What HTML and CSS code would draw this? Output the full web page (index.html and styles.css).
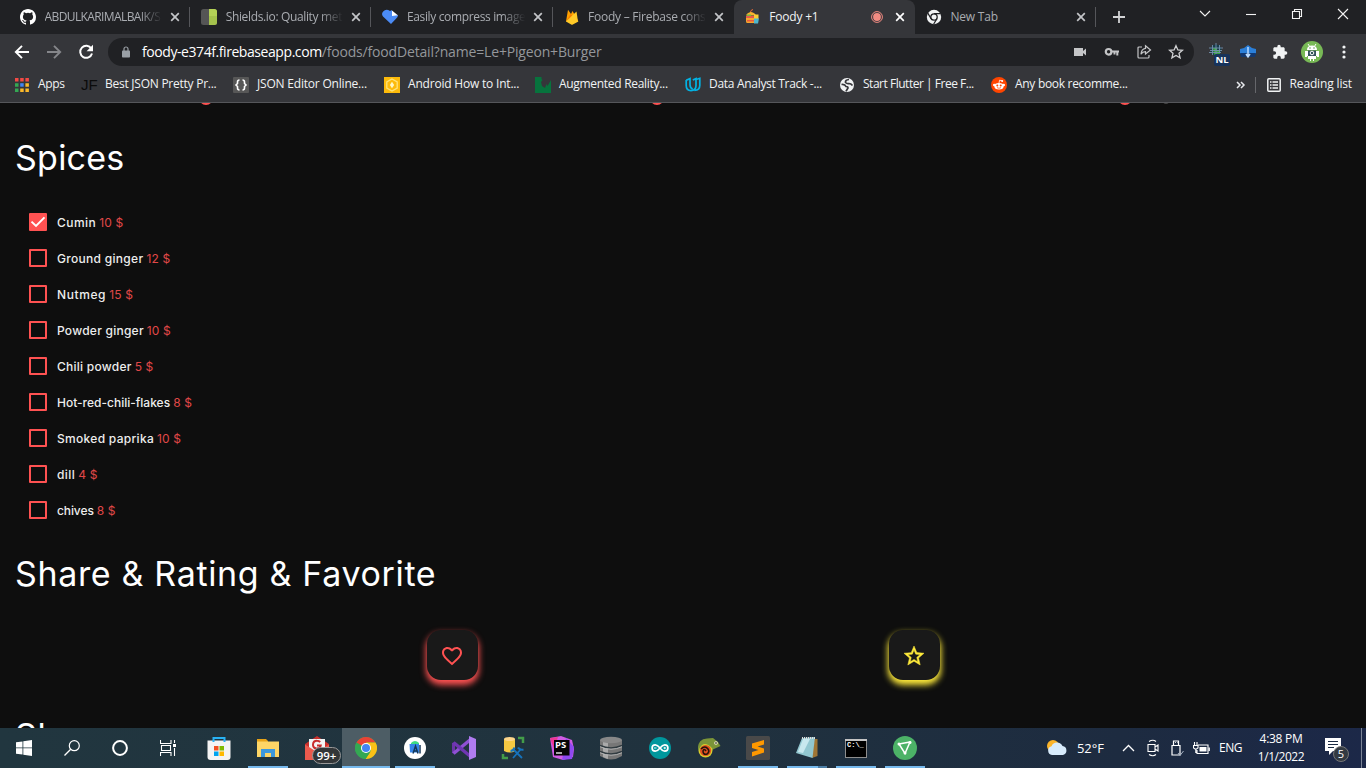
FILE: index.html
```html
<!DOCTYPE html>
<html lang="en">
<head>
<meta charset="utf-8">
<title>Foody +1</title>
<link rel="stylesheet" href="styles.css">
</head>
<body>
<div class="screen">
  <div class="tabstrip">
    <div class="tab">
      <svg class="fav" viewBox="0 0 16 16"><path fill="#fff" d="M8 0C3.58 0 0 3.58 0 8c0 3.54 2.29 6.53 5.47 7.59.4.07.55-.17.55-.38 0-.19-.01-.82-.01-1.49-2.01.37-2.53-.49-2.69-.94-.09-.23-.48-.94-.82-1.13-.28-.15-.68-.52-.01-.53.63-.01 1.08.58 1.23.82.72 1.21 1.87.87 2.33.66.07-.52.28-.87.51-1.07-1.78-.2-3.64-.89-3.64-3.95 0-.87.31-1.59.82-2.15-.08-.2-.36-1.02.08-2.12 0 0 .67-.21 2.2.82a7.4 7.4 0 0 1 4 0c1.53-1.04 2.2-.82 2.2-.82.44 1.1.16 1.92.08 2.12.51.56.82 1.27.82 2.15 0 3.07-1.87 3.75-3.65 3.95.29.25.54.73.54 1.48 0 1.07-.01 1.93-.01 2.2 0 .21.15.46.55.38A8.01 8.01 0 0 0 16 8c0-4.42-3.58-8-8-8z"/></svg>
      <span class="tab-title t1">ABDULKARIMALBAIK/S</span>
      <svg class="close" viewBox="0 0 10 10"><path d="M1.2 1.2l7.6 7.6M8.8 1.2L1.2 8.8"/></svg>
    </div>
    <div class="tab">
      <svg class="fav" viewBox="0 0 16 16"><rect width="16" height="16" rx="2.5" fill="#555"/><path d="M8 0h5.500a2.500 2.500 0 0 1 2.500 2.500v11a2.500 2.500 0 0 1-2.500 2.500H8z" fill="#a4c24c"/><path d="M8 0h5.500l2.500 2v5H8z" fill="#b3d156"/></svg>
      <span class="tab-title t2">Shields.io: Quality met</span>
      <svg class="close" viewBox="0 0 10 10"><path d="M1.2 1.2l7.6 7.6M8.800 1.200L1.200 8.800"/></svg>
    </div>
    <div class="tab">
      <svg class="fav" viewBox="0 0 16 16"><path fill="#4b8bf5" d="M1.200 2.500Q4-.5 8 2l2-1v5h6q0 2-2 3.800L9 15 1 7.500q-2-2.600.2-5z"/><path fill="#fff" d="M10 1.500l5.800 4.800L10 7z"/></svg>
      <span class="tab-title t3">Easily compress image</span>
      <svg class="close" viewBox="0 0 10 10"><path d="M1.200 1.200l7.600 7.600M8.800 1.200L1.200 8.800"/></svg>
    </div>
    <div class="tab last-before">
      <svg class="fav" viewBox="0 0 16 16"><path fill="#ffa000" d="M2 12.500L4 .8l3 4.200L8.500 2l6 10.500z"/><path fill="#f57c00" d="M2 12.500L6.500 5l3 3z"/><path fill="#ffca28" d="M2 12.500L12.500 2.500 14 12.700 8.800 15.600q-.8.400-1.600 0z"/></svg>
      <span class="tab-title t4">Foody – Firebase cons</span>
      <svg class="close" viewBox="0 0 10 10"><path d="M1.200 1.200l7.600 7.600M8.800 1.200L1.200 8.800"/></svg>
    </div>
    <div class="tab active">
      <svg class="fav" viewBox="0 0 16 16"><path d="M5 5l1-3.500 2-1" stroke="#ea6a35" fill="none"/><path fill="#f7b42c" d="M1 6.500q1-3 5-3.500Q10 3.500 11 6.500z"/><path fill="#e45b4d" d="M1 7h10v2H1z"/><path fill="#6fb846" d="M2 5.500h4v1.500H2z"/><path fill="#f8a62b" d="M1 9h10v5H2q-1 0-1-2z"/><path fill="#eb5a3f" d="M2 11h8v1.500H2z"/><path fill="#f9ce35" d="M9 5.500h4.500V10H9z"/><path fill="#4eb6cd" d="M9 9.500h5l-1 5H9z"/></svg>
      <span class="tab-title t5">Foody +1</span>
      <svg class="rec" viewBox="0 0 12 12"><circle cx="6" cy="6" r="5.400" fill="none" stroke="#f28b82" stroke-width="1"/><circle cx="6" cy="6" r="3.900" fill="#f28b82"/></svg>
      <svg class="close" viewBox="0 0 10 10"><path d="M1.200 1.200l7.600 7.600M8.800 1.200L1.200 8.800"/></svg>
    </div>
    <div class="tab">
      <svg class="fav" viewBox="0 0 16 16"><circle cx="8" cy="8" r="7.200" fill="#f1f3f4"/><circle cx="8" cy="8" r="3.200" fill="none" stroke="#202124" stroke-width="1.300"/><path d="M8 4.700h6.500M5.100 9.700L1.800 4.100M10.900 9.600l-3.300 5.600" stroke="#202124" stroke-width="1.200"/></svg>
      <span class="tab-title t6">New Tab</span>
      <svg class="close" viewBox="0 0 10 10"><path d="M1.200 1.200l7.600 7.600M8.800 1.200L1.200 8.800"/></svg>
    </div>
    <svg class="newtab" viewBox="0 0 12 12"><path d="M6 0v12M0 6h12" stroke="#d2d3d5" stroke-width="1.800"/></svg>
    <div class="winctl">
      <svg width="12" height="12" viewBox="0 0 12 12"><path d="M1 3l5 5 5-5"/></svg>
      <svg width="12" height="12" viewBox="0 0 12 12"><path d="M1 6.500h10"/></svg>
      <svg width="12" height="12" viewBox="0 0 12 12"><path d="M1.500 3.500h7v7h-7zM3.500 3.500v-2h7v7h-2"/></svg>
      <svg width="12" height="12" viewBox="0 0 12 12"><path d="M1 1l10 10M11 1L1 11"/></svg>
    </div>
  </div>

  <div class="toolbar">
    <svg class="nav" viewBox="0 0 16 16"><path d="M15 8H2M8 1.800L1.800 8 8 14.200" fill="none" stroke="#fff" stroke-width="1.900"/></svg>
    <svg class="nav" viewBox="0 0 16 16"><path d="M1 8h13M8 1.800L14.200 8 8 14.200" fill="none" stroke="#85868a" stroke-width="1.900"/></svg>
    <svg class="nav" viewBox="0 0 16 16"><path d="M13.300 4.600A6 6 0 1 0 14 9.500" fill="none" stroke="#fff" stroke-width="2"/><path fill="#fff" d="M15 .8v6.400H8.600z"/></svg>
    <div class="omnibox">
      <svg class="lock" viewBox="0 0 8 12"><path d="M2 5V3a2 2 0 0 1 4 0v2" fill="none" stroke="#9aa0a6" stroke-width="1.200"/><rect y="4.500" width="8" height="7" rx=".8" fill="#9aa0a6"/></svg>
      <span class="url"><span class="host">foody-e374f.firebaseapp.com</span><span class="path">/foods/foodDetail?name=Le+Pigeon+Burger</span></span>
      <svg class="oi" viewBox="0 0 16 16"><path fill="#c4c5c7" d="M2 4h9v3l3-2.500v7L11 9v3H2z"/></svg>
      <svg class="oi" viewBox="0 0 16 16"><path fill="none" stroke="#c4c5c7" stroke-width="2" d="M8 7.500h7M13.300 7.500v4M10.500 7.500v3"/><circle cx="4.600" cy="7.800" r="2.800" fill="none" stroke="#c4c5c7" stroke-width="2.200"/></svg>
      <svg class="oi" viewBox="0 0 16 16"><path fill="none" stroke="#c4c5c7" stroke-width="1.200" d="M6 3H3Q2 3 2 4v9q0 1 1 1h9q1 0 1-1v-2M9.500 1.800L14.500 6l-5 4V7.700Q6.500 7.700 5 10.300 5.300 5 9.500 4.400z"/></svg>
      <svg class="oi" viewBox="0 0 16 16"><path fill="none" stroke="#d0d1d3" stroke-width="1.300" d="M8 1.700l1.900 4.200 4.600.4-3.500 3 1.100 4.500L8 11.400l-4.100 2.400L5 9.300l-3.500-3 4.600-.4z"/></svg>
    </div>
    <div class="exts">
      <div class="ext-nl">
        <svg width="18" height="18" viewBox="0 0 18 18"><circle cx="8" cy="7" r="5.500" fill="#173c4b"/><path fill="#36a33a" d="M5 5h4v2h3v5H6z"/><path d="M1 5h14M1 9.500h12M2 7.500h12M4.500 2v10M8 0v14M11.500 2v8" stroke="#7590ad" stroke-width=".9" fill="none"/></svg>
        <span class="nl">NL</span>
      </div>
      <svg width="16" height="16" viewBox="0 0 16 16"><path fill="#2b7fd8" d="M0 5l4-1 4-3 4 3 4 1v5H0z"/><path fill="#12376e" d="M0 9h16l-1 4H1z"/><path d="M8 3v9M6 10l2 3 2-3" stroke="#bcdcff" stroke-width="1.500" fill="none"/></svg>
      <svg width="16" height="16" viewBox="0 0 24 24"><path fill="#f1f3f4" d="M20.500 11H19V7c0-1.100-.9-2-2-2h-4V3.500a2.500 2.500 0 0 0-5 0V5H4c-1.100 0-2 .9-2 2v3.800h1.500a2.700 2.700 0 0 1 0 5.400H2V20c0 1.100.9 2 2 2h3.800v-1.500a2.700 2.700 0 0 1 5.400 0V22H17c1.100 0 2-.9 2-2v-4h1.500a2.500 2.500 0 0 0 0-5z"/></svg>
      <svg width="22" height="22" viewBox="0 0 22 22"><circle cx="11" cy="11" r="11" fill="#78b956"/><path d="M7 3l2 3M15 3l-2 3" stroke="#fff"/><path fill="#fff" d="M6 9q0-4.500 5-4.500T16 9zM4 10h14v6h-2v-1H6v1H4zM7 15h8v3h-2v2h-1v-2h-2v2H9v-2H7z"/><circle cx="9" cy="7" r=".7" fill="#468038"/><circle cx="13" cy="7" r=".7" fill="#468038"/><rect x="7" y="9.500" width="8" height="5.500" fill="#35535d"/><circle cx="11" cy="12" r="1.800" fill="none" stroke="#fff"/></svg>
      <svg width="4" height="16" viewBox="0 0 4 16"><circle cx="2" cy="3" r="1.600" fill="#f1f3f4"/><circle cx="2" cy="8" r="1.600" fill="#f1f3f4"/><circle cx="2" cy="13" r="1.600" fill="#f1f3f4"/></svg>
    </div>
  </div>

  <div class="bookmarks">
    <div class="bm b1"><svg viewBox="0 0 16 16"><path fill="#f44a45" d="M1 1h3.500v3.500H1zM6.200 1h3.500v3.500H6.200zM11.400 1h3.500v3.500h-3.500z"/><path fill="#34a853" d="M1 6.200h3.500v3.500H1zM1 11.400h3.500v3.500H1z"/><path fill="#4285f4" d="M6.200 6.200h3.500v3.500H6.200z"/><path fill="#fbb829" d="M11.400 6.200h3.500v3.500h-3.500zM6.200 11.400h3.500v3.500H6.200zM11.400 11.400h3.500v3.500h-3.500z"/></svg><span>Apps</span></div>
    <div class="bm b2"><i class="jf">JF</i><span>Best JSON Pretty Pr...</span></div>
    <div class="bm b3"><svg viewBox="0 0 16 16"><rect width="16" height="16" rx="1" fill="#575757"/><path d="M6.500 3Q4.500 3 4.500 5v1.500L3 8l1.500 1.500V11q0 2 2 2M9.500 3q2 0 2 2v1.500L13 8l-1.500 1.500V11q0 2-2 2" fill="none" stroke="#fff" stroke-width="1.600"/></svg><span>JSON Editor Online...</span></div>
    <div class="bm b4"><svg viewBox="0 0 16 16"><rect width="16" height="16" fill="#fdbb0b"/><path d="M8 2l5.200 3v6L8 14l-5.200-3V5z" fill="none" stroke="#ffe37a" stroke-width="1.300"/><path d="M8 4.800l2.200 3.200L8 11.200 5.800 8z" fill="#fff6c2"/></svg><span>Android How to Int...</span></div>
    <div class="bm b5"><svg viewBox="0 0 16 16"><path fill="#07733d" d="M0 0h6.500v2l1 1L6 5l1 4 3 2 1.500-4 1 2L16 3v13H0z"/></svg><span>Augmented Reality...</span></div>
    <div class="bm b6"><svg viewBox="0 0 16 16"><path d="M1.200 3.200L5 1.600v6.200q0 3.200 2.700 4.200M7.800 3L11 1.600v7q0 5-5 5-4.800 0-4.800-5V3M11 2.500l3.800-1.200v7q0 5-5.300 5.200" fill="none" stroke="#02b3e4" stroke-width="1.700"/></svg><span>Data Analyst Track -...</span></div>
    <div class="bm b7"><svg viewBox="0 0 16 16"><circle cx="8" cy="8" r="7" fill="#f1f3f4"/><path d="M2.500 7.500Q6 7 7 9.500q2 0 2 1.500L7 14.300M10 2.500Q6 3 6.500 5.500 8 7 10 6.500q2 0 3.500 2" fill="none" stroke="#35363a" stroke-width="1.700"/></svg><span>Start Flutter | Free F...</span></div>
    <div class="bm b8"><svg viewBox="0 0 16 16"><circle cx="8" cy="8" r="8" fill="#ff4500"/><ellipse cx="8" cy="9.200" rx="4.600" ry="3.300" fill="#fff"/><circle cx="3.300" cy="8" r="1.300" fill="#fff"/><circle cx="12.700" cy="8" r="1.300" fill="#fff"/><path d="M8 6l.6-2.800 2.400.6" stroke="#fff" fill="none" stroke-width=".8"/><circle cx="11.200" cy="3.900" r="1" fill="#fff"/><circle cx="6.300" cy="8.500" r="1" fill="#ff4500"/><circle cx="9.700" cy="8.500" r="1" fill="#ff4500"/><path d="M6 10.600q2 1.300 4 0" stroke="#ff4500" fill="none" stroke-width=".7"/></svg><span>Any book recomme...</span></div>
    <div class="bm-right">
      <svg width="10" height="8" viewBox="0 0 10 8"><path d="M1 1l3 3-3 3M5 1l3 3-3 3" fill="none" stroke="#e8eaed" stroke-width="1.500"/></svg>
      <i class="vsep"></i>
      <svg width="14" height="14" viewBox="0 0 14 14"><rect x=".8" y=".8" width="12.400" height="12.400" rx="1" fill="none" stroke="#f1f3f4" stroke-width="1.500"/><path d="M3 4h1.500M3 7h1.500M3 10h1.500M5.500 4H11M5.500 7H11M5.500 10H11" stroke="#f1f3f4" stroke-width="1.500"/></svg>
      <span>Reading list</span>
    </div>
  </div>

  <main class="page">
    <div class="cut"><i></i><i></i><i></i><i class="dim"></i></div>
    <h1 class="h-spices">Spices</h1>
    <ul class="spices">
      <li><i class="box on"><svg viewBox="0 0 18 18"><path d="M2.500 8.600l4.500 4.300L15.500 4.400" fill="none" stroke="#fff" stroke-width="2"/></svg></i><b class="s1">Cumin</b><em>10 $</em></li>
      <li><i class="box"></i><b class="s2">Ground ginger</b><em>12 $</em></li>
      <li><i class="box"></i><b class="s3">Nutmeg</b><em>15 $</em></li>
      <li><i class="box"></i><b class="s4">Powder ginger</b><em>10 $</em></li>
      <li><i class="box"></i><b class="s5">Chili powder</b><em>5 $</em></li>
      <li><i class="box"></i><b class="s6">Hot-red-chili-flakes</b><em>8 $</em></li>
      <li><i class="box"></i><b class="s7">Smoked paprika</b><em>10 $</em></li>
      <li><i class="box"></i><b class="s8">dill</b><em>4 $</em></li>
      <li><i class="box"></i><b class="s9">chives</b><em>8 $</em></li>
    </ul>
    <h1 class="h-share">Share &amp; Rating &amp; Favorite</h1>
    <div class="actions">
      <div class="act red"><svg width="24" height="24" viewBox="0 0 24 24"><path fill="#ff5252" d="M16.500 3c-1.740 0-3.410.81-4.500 2.090C10.910 3.810 9.240 3 7.500 3 4.420 3 2 5.420 2 8.500c0 3.780 3.400 6.860 8.550 11.540L12 21.350l1.450-1.320C18.600 15.360 22 12.280 22 8.500 22 5.420 19.580 3 16.500 3zm-4.400 15.550l-.1.100-.1-.1C7.140 14.240 4 11.390 4 8.500 4 6.500 5.500 5 7.500 5c1.540 0 3.040.99 3.570 2.360h1.870C13.460 5.990 14.960 5 16.500 5c2 0 3.500 1.500 3.500 3.500 0 2.890-3.140 5.740-7.900 10.050z"/></svg></div>
      <div class="act yellow"><svg width="24" height="24" viewBox="0 0 24 24"><path fill="#ffeb3b" stroke="#ffeb3b" stroke-width=".5" d="M22 9.240l-7.190-.62L12 2 9.190 8.630 2 9.240l5.460 4.730L5.820 21 12 17.270 18.180 21l-1.630-7.030L22 9.240zM12 15.400l-3.760 2.270 1-4.280-3.320-2.880 4.380-.38L12 6.100l1.710 4.040 4.380.38-3.320 2.880 1 4.280L12 15.400z"/></svg></div>
    </div>
    <h1 class="h-next">Share</h1>
  </main>

  <footer class="taskbar">
    <div class="cells sys">
      <div class="cell"><svg width="16" height="16" viewBox="0 0 16 16"><path fill="#fff" d="M0 2.300l6.500-.9v6.100H0zM7.300 1.300L16 0v7.500H7.300zM0 8.300h6.500v6.300L0 13.700zM7.300 8.300H16V16l-8.700-1.200z"/></svg></div>
      <div class="cell"><svg width="16" height="16" viewBox="0 0 16 16"><circle cx="10.300" cy="5.700" r="5" fill="none" stroke="#fff" stroke-width="1.200"/><path d="M6.700 9.300L.5 15.500" stroke="#fff" stroke-width="1.300"/></svg></div>
      <div class="cell"><svg width="16" height="16" viewBox="0 0 16 16"><circle cx="8" cy="8" r="6.900" fill="none" stroke="#fff" stroke-width="2"/></svg></div>
      <div class="cell"><svg width="16" height="16" viewBox="0 0 16 16"><path d="M.5 0v3.500h10.500V0M1.500 5.500h9v5h-9zM.5 16v-3.500H11V16M14.500 0v3M14.500 8v8" fill="none" stroke="#fff" stroke-width="1.100"/><path fill="#fff" d="M13 4h3v3h-3z"/></svg></div>
    </div>
    <div class="cells apps">
      <div class="cell"><svg width="24" height="24" viewBox="0 0 24 24"><path fill="#f4f4f4" d="M.5 4.500h23v16.500q0 3-3 3h-17q-3 0-3-3z"/><path d="M6.500 6V2h11v4" fill="none" stroke="#28b2f4" stroke-width="2"/><path fill="#f25022" d="M7 10h4.500v4.500H7z"/><path fill="#7fba00" d="M12.500 10H17v4.500h-4.500z"/><path fill="#00a4ef" d="M7 15.500h4.500V20H7z"/><path fill="#ffb900" d="M12.500 15.500H17V20h-4.500z"/></svg></div>
      <div class="cell open"><svg width="24" height="24" viewBox="0 0 24 24"><path fill="#e8a317" d="M1 3h9l2 2v3H1z"/><path fill="#fdd566" d="M1 5.500h22V21H1z"/><path fill="#3c98dc" d="M5 13h14v8h-4v-4H9v4H5z"/></svg></div>
      <div class="cell gm"><svg width="24" height="24" viewBox="0 0 24 24"><path fill="#c9302c" d="M0 8L12 0l12 8v16H0z"/><path fill="#f3f3f3" d="M4 3h16v11H4z"/><path d="M15.200 6q-1.200-1.300-3.200-1.300a3.900 3.900 0 1 0 3.700 4.800H12" stroke="#c92c2c" stroke-width="2" fill="none"/><path fill="#ec5a4d" d="M0 8.500l12 7.500 12-7.500V24H0z"/></svg><span class="count">99+</span></div>
      <div class="cell active"><svg width="22" height="22" viewBox="0 0 22 22"><circle cx="11" cy="11" r="11" fill="#34a853"/><path fill="#e94235" d="M11 11L1.500 5.500A11 11 0 0 1 20.500 5.500H11z"/><path fill="#fbc116" d="M20.500 5.500A11 11 0 0 1 10.500 22L15.800 13.700 11 5.500z"/><path fill="#34a853" d="M1.500 5.500l4.800 8.200L11 16l4.300-1L10.500 22A11 11 0 0 1 1.500 5.500z"/><circle cx="11" cy="11" r="5" fill="#fff"/><circle cx="11" cy="11" r="4" fill="#4285f4"/></svg></div>
      <div class="cell open"><svg width="22" height="22" viewBox="0 0 22 22"><circle cx="11" cy="11" r="11" fill="#fff"/><path fill="#3ddc84" d="M7 6q4-4 8 0v4H7z"/><path fill="#3484e8" d="M5.500 7H15v8.500H6z"/><path d="M9 16.500l2.500-7.500 2.500 7.500M9.800 14h3.500M16 8v8.500" stroke="#143757" stroke-width="1.500" fill="none"/></svg></div>
      <div class="cell"><svg width="24" height="24" viewBox="0 0 24 24"><path fill="#6b35a8" d="M0 7l3-1v12l-3-1z"/><path d="M1.500 17.500L18 4" stroke="#8f50d4" stroke-width="3.500"/><path d="M1.500 6.500L18 20" stroke="#6f35b3" stroke-width="3.500"/><path fill="#b07cf0" d="M17 0l7 3v18l-7 3z"/></svg></div>
      <div class="cell"><svg width="24" height="24" viewBox="0 0 24 24"><path d="M17 2h5v5M2 18v4h5" fill="none" stroke="#439d49" stroke-width="2.500"/><path fill="#f5c842" d="M3 3h11v12q-5 3-11 0z"/><ellipse cx="8.500" cy="3" rx="5.500" ry="2" fill="#fdd58a"/><path d="M12 13l9 9M20 13l-8 9" stroke="#1673bd" stroke-width="1.800" fill="none"/><path d="M17 11.500q2 3 5.500 2M9.500 15q3 0 4-3.500" stroke="#1673bd" stroke-width="2.200" fill="none"/></svg></div>
      <div class="cell"><svg width="24" height="24" viewBox="0 0 24 24"><path fill="#d05be4" d="M0 2l11-2 11 4 2 9-1 8-10 3L3 21z"/><path fill="#8e49f0" d="M16 2l8 9-2 12-10 1z"/><path fill="#ef3794" d="M0 2l8-1-4 12z"/><rect x="4" y="4" width="15.500" height="15.500" fill="#050505"/><path d="M6 17h6" stroke="#fff" stroke-width="1.300"/></svg><span class="ps">PS</span></div>
      <div class="cell"><svg width="24" height="24" viewBox="0 0 24 24"><path fill="#777" d="M1 4h22v16q-11 7-22 0z"/><path fill="#aaa" d="M4 6h5v17l-5-2z"/><ellipse cx="12" cy="4" rx="11" ry="3.300" fill="#888"/><path d="M1 9.500q11 5 22 0M1 15.500q11 5 22 0" stroke="#303b40" stroke-width="1.500" fill="none"/><path d="M1 10.700q11 5 22 0M1 16.700q11 5 22 0" stroke="#c2c2c2" stroke-width=".8" fill="none"/></svg></div>
      <div class="cell"><svg width="22" height="22" viewBox="0 0 22 22"><circle cx="11" cy="11" r="11" fill="#00979d"/><path d="M11 11Q8.500 7.800 6.300 7.800a3.200 3.200 0 0 0 0 6.400Q8.500 14.200 11 11q2.500-3.200 4.700-3.200a3.200 3.200 0 0 1 0 6.400Q13.500 14.200 11 11z" fill="none" stroke="#fff" stroke-width="1.700"/><path d="M5 11h2.500M14.500 11H17M15.750 9.800v2.400" stroke="#fff" stroke-width=".9"/></svg></div>
      <div class="cell"><svg width="24" height="24" viewBox="0 0 24 24"><path fill="#7b9538" d="M1 12Q1 3 10 2.500L16 2l5 4 2.500 4-5.500 2.500-3 1.500-5 0z"/><circle cx="8.500" cy="14.500" r="7" fill="#d8cf2e"/><circle cx="8.500" cy="14.500" r="5.600" fill="#e2501f"/><path d="M9 15q-2-3-3 0 0 4 4 3 3-2 1-5-3-4-7 0" stroke="#25150b" stroke-width="1.600" fill="none"/><path fill="#7b9538" d="M1 13Q1 6 9 5l6 2v5Q9 6 5 9q-2.500 2-3 6z"/><circle cx="19" cy="7" r="1.800" fill="#f4f1d3"/><circle cx="19" cy="7" r=".8"/></svg></div>
      <div class="cell open"><svg width="24" height="24" viewBox="0 0 24 24"><rect width="24" height="24" rx="1.500" fill="#494949"/><path fill="#ff9800" d="M6 7.500L18 4v4.500l-6.500 2 6.500 2v4L6 20.500V16l6.500-2L6 12z"/></svg></div>
      <div class="cell open multi"><svg width="24" height="24" viewBox="0 0 24 24"><path fill="#9f7535" d="M19 3h3.500v17L17 22z"/><path fill="#92c7d0" d="M7 2l13-1-2.500 21L1 17z"/><path fill="#c8e8ee" d="M8 3h7L8 17l-5-1z"/><path d="M7 2h13" stroke="#ddd" stroke-width="1.800" stroke-dasharray="1 1"/></svg></div>
      <div class="cell open"><svg width="24" height="24" viewBox="0 0 24 24"><path fill="#8e8e8e" d="M1 3h22v19H1z"/><path fill="#c4c4c4" d="M1 3h22v2H1z"/><path fill="#000" d="M2 5h20v16H2z"/></svg><span class="cmd">C:\_</span></div>
      <div class="cell open"><svg width="24" height="24" viewBox="0 0 24 24"><circle cx="12" cy="12" r="12" fill="#4cb267"/><path d="M6 8l11-2-5 11.500z" fill="none" stroke="#fff" stroke-width="1.500"/><circle cx="6" cy="8" r="1.500" fill="#fff"/><circle cx="17" cy="6.500" r="1.500" fill="#fff"/><circle cx="12" cy="17" r="1.500" fill="#fff"/></svg></div>
    </div>
    <div class="tray">
      <svg class="weather" width="22" height="18" viewBox="0 0 22 18"><circle cx="7" cy="7" r="6" fill="#fbb42a"/><path fill="#d7ebfc" d="M6 16a4.500 4.500 0 0 1-.5-8.800 6 6 0 0 1 11-.2A4.600 4.600 0 0 1 17 16z"/></svg>
      <span class="temp">52°F</span>
      <svg class="chev" width="13" height="8" viewBox="0 0 13 8"><path d="M1 7l5.500-5.500L12 7" fill="none" stroke="#fff" stroke-width="1.300"/></svg>
      <svg class="cam" width="12" height="18" viewBox="0 0 12 18"><path d="M1 5.500h7v7H1zM8 8l3-2v6l-3-2M2 2.500Q6 0 9 2.500M2 15.500q4 2.500 7 0" fill="none" stroke="#fff" stroke-width="1.100"/></svg>
      <svg class="usb" width="13" height="17" viewBox="0 0 13 17"><path d="M2.500 5V1h5v4M1 5.500h8V15H1zM4 2.500h.8M6 2.500h.5" fill="none" stroke="#fff" stroke-width="1.200"/><path d="M7 13l2 2.500L12.500 11" fill="none" stroke="#a9b4c4"/></svg>
      <svg class="bat" width="17" height="13" viewBox="0 0 17 13"><path d="M6.500 5h7v4.500h-7z" fill="#fff"/><path d="M5 3h10v8.500H4V8M16.300 5.500v3.500M1.500 0v3M4 0v3M.5 3.500h4.500V6L3.500 7H2L.5 6zM2.800 7v3.500H4" fill="none" stroke="#fff" stroke-width="1.100"/></svg>
      <span class="eng">ENG</span>
      <div class="clock"><span class="time">4:38 PM</span><span class="date">1/1/2022</span></div>
      <div class="note"><svg width="17" height="17" viewBox="0 0 17 17"><path fill="#fff" d="M0 0h16v13H8l-4 4v-4H0z"/><path d="M3 3.500h10M3 6.500h10M3 9.500h6" stroke="#1b2a42" stroke-width="1.100"/></svg><span class="badge">5</span></div>
      <i class="peek"></i>
    </div>
  </footer>
</div>
</body>
</html>
```
FILE: styles.css
```css
* { box-sizing: border-box; }
body { margin: 0; background: #0e0e0e; font-family: "Open Sans", "Noto Sans", sans-serif; }
svg { display: block; flex: none; }
i, em { font-style: normal; }
.screen { width: 1366px; height: 768px; display: flex; flex-direction: column; overflow: hidden; }

/* tab strip */
.tabstrip { height: 34px; flex: none; background: #202124; display: flex; padding-left: 9px; }
.tab { width: 181.200px; flex: none; height: 34px; display: flex; align-items: center; padding: 0 10px 0 11px; position: relative; color: #a9acb1; font-size: 12px; }
.tab::after { content: ""; width: 1px; height: 20px; background: #55565a; position: absolute; right: 0; top: 7px; }
.tab.active::after, .tab.last-before::after { display: none; }
.tab.active { background: #35363a; border-radius: 8px 8px 0 0; color: #f1f3f4; }
.fav { width: 16px; height: 16px; }
.tab-title { flex: 1; margin: 0 4px 0 8.500px; white-space: nowrap; line-height: 18px; letter-spacing: -.2px; }
.t1, .t2, .t3, .t4 { -webkit-mask-image: linear-gradient(90deg, #000 78%, transparent 97%); mask-image: linear-gradient(90deg, #000 78%, transparent 97%); }
.t1 { letter-spacing: -.6px; }
.t2, .t3 { letter-spacing: -.35px; }
.t4 { letter-spacing: -.25px; }
.close { width: 10px; height: 10px; }
.close path { stroke: #c3c5c8; stroke-width: 1.700; }
.active .close path { stroke: #fff; }
.rec { width: 12px; height: 12px; margin-right: 12px; }
.newtab { width: 12px; height: 12px; margin: 11px 0 0 17px; }
.winctl { display: flex; gap: 34px; margin: 8px 17px 0 auto; }
.winctl path { fill: none; stroke: #f3f3f3; stroke-width: 1.100; }

/* toolbar */
.toolbar { height: 34px; flex: none; background: #35363a; display: flex; align-items: center; padding-left: 14px; padding-top: 2px; }
.nav { width: 16px; height: 16px; margin-right: 16px; }
.omnibox { width: 1086px; height: 28px; border-radius: 14px; background: #202124; display: flex; align-items: center; padding: 0 10px 0 14px; margin-left: -2px; }
.lock { width: 8px; height: 12px; }
.url { flex: 1; margin-left: 12px; font-size: 14px; line-height: 20px; white-space: nowrap; }
.host { color: #fff; letter-spacing: -.43px; }
.path { color: #94979b; letter-spacing: -.17px; }
.oi { width: 16px; height: 16px; margin-left: 16px; }
.exts { display: flex; align-items: center; margin-left: 14px; }
.exts > * { margin-right: 16px; }
.exts > :nth-child(1) { margin-right: 14px; }
.exts > :nth-child(3) { margin-right: 13px; }
.exts > :nth-child(4) { margin-right: 19px; }
.ext-nl { width: 18px; height: 18px; position: relative; }
.nl { position: absolute; left: 6px; top: 11px; width: 16px; height: 12px; border-radius: 2px; background: #17335b; color: #fff; font-size: 9.500px; font-weight: 700; line-height: 12px; text-align: center; }

/* bookmarks */
.bookmarks { height: 35px; flex: none; background: #35363a; border-bottom: 1px solid #55565a; display: flex; align-items: center; padding: 0 14px 1px 14px; color: #f1f3f4; font-size: 12px; line-height: 18px; }
.bm { display: flex; align-items: center; gap: 8px; white-space: nowrap; flex: none; letter-spacing: -.3px; }
.bm span, .bm-right span { margin-bottom: 2px; }
.bm svg, .jf { width: 16px; height: 16px; }
.jf { color: #0b0b0b; font: 15px/16px "Liberation Sans", sans-serif; letter-spacing: 0; }
.b1 { width: 67px; }
.b2 { width: 152px; letter-spacing: -.25px; }
.b3 { width: 151px; letter-spacing: -.2px; }
.b4 { width: 151px; letter-spacing: -.2px; }
.b5 { width: 150px; }
.b6 { width: 154px; }
.b7 { width: 152px; letter-spacing: -.48px; }
.b8 { width: 148px; }
.bm-right { display: flex; align-items: center; margin-left: auto; letter-spacing: -.15px; white-space: nowrap; }
.vsep { width: 1px; height: 16px; background: #66676b; margin: 0 11px 0 9px; }
.bm-right span { margin-left: 9px; }

/* page */
.page { height: 625px; flex: none; overflow: hidden; background: #0e0e0e; font-family: Inter, "Open Sans", sans-serif; color: #fff; display: flow-root; }
.cut { height: 2px; overflow: hidden; display: flex; align-items: flex-end; padding-left: 199px; }
.cut i { width: 14px; height: 14px; flex: none; border-radius: 7px; background: #ff5252; margin-right: 437px; }
.cut i:nth-child(2) { margin-right: 454px; }
.cut i:nth-child(3) { margin-right: 31px; }
.cut i.dim { width: 6px; height: 6px; background: #444; margin: 0 0 1px; }
h1 { margin: 0; padding-left: 15px; font-size: 34px; line-height: 44px; font-weight: 400; white-space: nowrap; letter-spacing: .65px; }
.h-spices { margin-top: 31px; letter-spacing: .25px; }
.spices { list-style: none; margin: 24px 0 0; padding: 0 0 0 29px; }
.spices li { height: 36px; display: flex; align-items: center; font-size: 12px; }
.box { width: 18px; height: 18px; border: 2px solid #ff5252; border-radius: 1px; flex: none; }
.box.on { background: #ff5252; border: 0; }
.spices b { margin-left: 10px; font-weight: 500; color: #ededed; }
.spices em { margin-left: 3px; color: #e04848; letter-spacing: .15px; }
.spices .s1 { letter-spacing: .45px; }
.spices .s2 { letter-spacing: .3px; }
.spices .s3 { letter-spacing: .6px; }
.spices .s4, .spices .s5 { letter-spacing: .25px; }
.spices .s7 { letter-spacing: .3px; }
.spices .s8 { letter-spacing: .45px; }
.spices .s9 { letter-spacing: -.1px; }
.h-share { margin-top: 24px; }
.actions { display: flex; margin-top: 34px; padding-left: 427px; gap: 411px; }
.act { width: 51px; height: 50px; border-radius: 14px; background: #191919; display: flex; align-items: center; justify-content: center; padding: 1px 1px 0 0; }
.red { box-shadow: 0 4px 6px 1px #ff5252; }
.yellow { box-shadow: 0 4px 6px 1px #ffeb3b; }
.h-next { margin-top: 34px; }

/* taskbar */
.taskbar { height: 40px; flex: none; background: linear-gradient(90deg, #21363f, #20323e 50%, #1d2b40 82%, #1c2848); display: flex; color: #fff; }
.cells { display: flex; }
.apps { gap: 1px; margin-left: 3px; }
.cell { width: 48px; height: 40px; display: flex; align-items: center; justify-content: center; position: relative; }
.cell.open::after, .cell.active::after { content: ""; position: absolute; left: 4px; right: 4px; bottom: 0; height: 2px; background: #76b9ed; }
.cell.active { background: #4d5d65; }
.cell.active::after { left: 0; right: 0; }
.cell.multi::after { background: linear-gradient(90deg, #76b9ed 31px, #4c7ea6 31px); }
.count { position: absolute; left: 19px; top: 19px; width: 29px; height: 17px; border: 1px solid #999; border-radius: 9px; background: #333638; font-size: 11.500px; font-weight: 600; line-height: 15px; text-align: center; }
.ps { position: absolute; left: 17px; top: 11px; font: 700 9.500px/12px "Open Sans", sans-serif; }
.cmd { position: absolute; left: 15px; top: 13px; font: 700 7px/8px "Liberation Mono", monospace; }
.tray { margin-left: auto; display: flex; align-items: center; font-size: 12px; white-space: nowrap; }
.temp { margin-left: 9px; font-size: 13px; letter-spacing: -.1px; width: 36px; }
.chev { margin-left: 9px; }
.cam { margin-left: 12px; }
.usb { margin-left: 12px; }
.bat { margin-left: 9px; }
.eng { margin-left: 9px; width: 28px; letter-spacing: -.5px; margin-bottom: 2px; }
.clock { width: 50px; margin-left: 9px; display: flex; flex-direction: column; text-align: center; line-height: 18px; letter-spacing: -.3px; align-items: center; }
.date { letter-spacing: -.45px; }
.note { width: 26px; height: 26px; margin-left: 19px; position: relative; padding-top: 3px; }
.badge { position: absolute; left: 8px; top: 11px; width: 16px; height: 16px; border-radius: 50%; border: 1px solid #777; background: #333a42; font-size: 11px; line-height: 14px; text-align: center; }
.peek { width: 1px; height: 40px; background: #7b8496; margin: 0 4px 0 10px; }
```
